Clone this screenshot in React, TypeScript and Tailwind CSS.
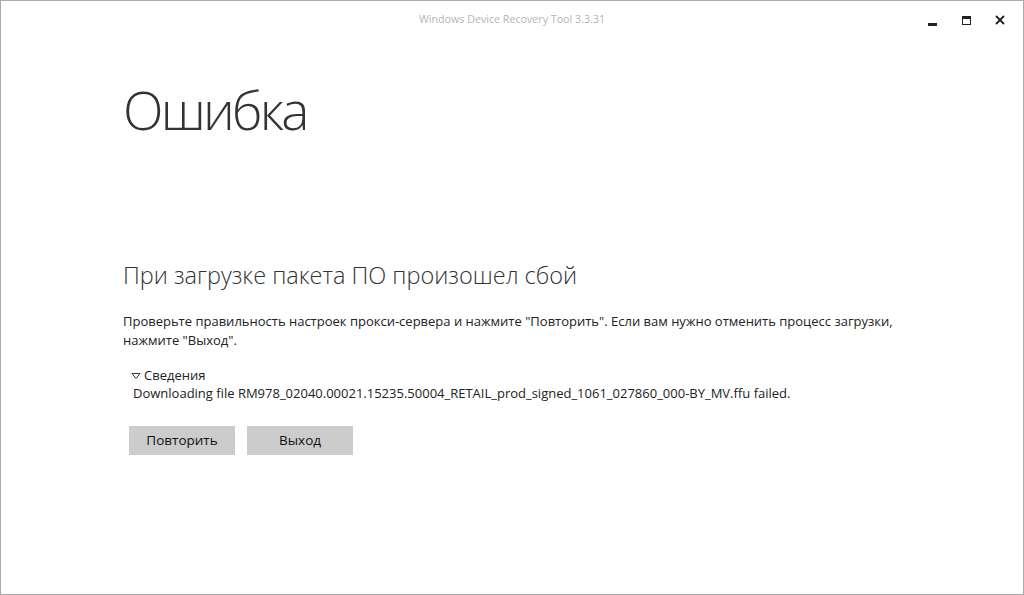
import { useState } from 'react'

const font = { fontFamily: '"Open Sans", "Noto Sans", sans-serif' }

export default function App() {
  const [open, setOpen] = useState(true)

  return (
    <div className="h-[595px] w-[1024px] overflow-hidden bg-white" style={font}>
      <div className="flex h-full flex-col border border-[#a9a9a9]">
        <header className="relative flex h-[38px] shrink-0 items-center justify-center">
          <span className="-mt-[2px] text-[10.7px] text-[#b4b4b4]">Windows Device Recovery Tool 3.3.31</span>
          <div className="absolute right-0 top-0 flex h-[38px] items-center gap-[20px] pr-[16px] text-[#222]">
            <button className="flex h-[14px] w-[14px] items-end justify-center pb-[1px]">
              <span className="h-[3px] w-[9px] bg-[#222]" />
            </button>
            <button className="flex h-[14px] w-[14px] items-center justify-center">
              <span className="h-[9px] w-[9px] border border-t-[3px] border-[#222]" />
            </button>
            <button className="flex h-[14px] w-[14px] items-center justify-center">
              <svg width="10" height="10" viewBox="0 0 10 10">
                <path d="M1 1L9 9M9 1L1 9" stroke="#222" strokeWidth="1.8" />
              </svg>
            </button>
          </div>
        </header>

        <main className="flex flex-col pl-[122px]">
          <h1 className="mt-[35px] text-[53px] font-light leading-[72px] tracking-[-2.8px] text-[#333]">Ошибка</h1>

          <h2 className="mt-[113px] text-[23.5px] font-light leading-[32px] text-[#333]">
            При загрузке пакета ПО произошел сбой
          </h2>

          <p className="mt-[21px] max-w-[790px] text-[13px] leading-[19px] text-[#222]">
            Проверьте правильность настроек прокси-сервера и нажмите "Повторить". Если вам нужно отменить процесс загрузки,
            нажмите "Выход".
          </p>

          <div className="mt-[16px] pl-[8px] text-[13px] leading-[18px] text-[#222]">
            <button className="flex items-center gap-[3px]" onClick={() => setOpen(!open)}>
              <svg width="10" height="8" viewBox="0 0 10 8" className="mt-[1px]">
                <path d="M1 1.5H9L5 6.5Z" fill="none" stroke="#333" strokeWidth="1" />
              </svg>
              <span>Сведения</span>
            </button>
            {open && (
              <div className="pl-[2px]">
                Downloading file RM978_02040.00021.15235.50004_RETAIL_prod_signed_1061_027860_000-BY_MV.ffu failed.
              </div>
            )}
          </div>

          <div className="mt-[24px] flex gap-[12px] pl-[6px]">
            <button className="h-[29px] w-[106px] bg-[#cccccc] text-[13.5px] text-[#111]">Повторить</button>
            <button className="h-[29px] w-[106px] bg-[#cccccc] text-[13.5px] text-[#111]">Выход</button>
          </div>
        </main>
      </div>
    </div>
  )
}
